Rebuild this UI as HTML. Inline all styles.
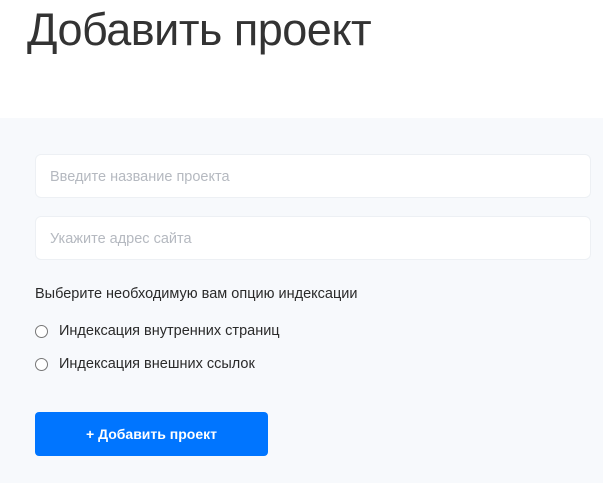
<!DOCTYPE html>
<html><head><meta charset="utf-8"><style>
body{margin:0;width:603px;height:483px;overflow:hidden;background:#fff;font-family:"Liberation Sans",sans-serif;position:relative}
h1{position:absolute;left:27px;top:4px;margin:0;font-weight:400;font-size:45px;color:#333;letter-spacing:-0.5px;white-space:nowrap}
.bg{position:absolute;left:0;top:118px;width:603px;height:365px;background:#f7f9fc}
.inp{position:absolute;left:35px;width:556px;height:44px;background:#fff;border:1px solid #edf0f4;border-radius:6px;box-sizing:border-box;color:#b5b9c0;font-size:14.5px;line-height:44px;padding-left:14px}
.t{position:absolute;left:35px;font-size:14.5px;color:#2a2a2a;white-space:nowrap}
.cb{position:absolute;left:35px;width:13px;height:13px;border:1px solid #777;border-radius:50%;box-sizing:border-box;background:#fff}
.btn{position:absolute;left:35px;top:412px;width:233px;height:44px;background:#0075ff;border-radius:4px;color:#fff;font-weight:700;font-size:14px;text-align:center;line-height:44px}
</style></head><body>
<h1>Добавить проект</h1>
<div class="bg"></div>
<div class="inp" style="top:154px">Введите название проекта</div>
<div class="inp" style="top:216px">Укажите адрес сайта</div>
<div class="t" style="top:286px">Выберите необходимую вам опцию индексации</div>
<div class="cb" style="top:325px"></div><div class="t" style="left:59px;top:323px">Индексация внутренних страниц</div>
<div class="cb" style="top:358px"></div><div class="t" style="left:59px;top:356px">Индексация внешних ссылок</div>
<div class="btn">+ Добавить проект</div>
</body></html>
